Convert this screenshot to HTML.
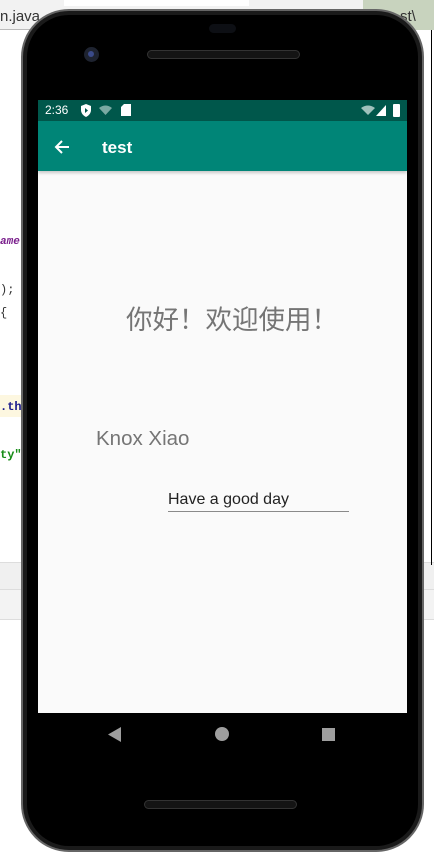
<!DOCTYPE html>
<html><head><meta charset="utf-8"><style>
*{margin:0;padding:0;box-sizing:border-box}
body{width:434px;height:861px;overflow:hidden;background:#fff;position:relative;font-family:"Liberation Sans","Noto Sans CJK SC",sans-serif}
.abs{position:absolute}
</style></head><body>
<div class="abs" style="left:0;top:0;width:434px;height:30px;background:#f2f2f2;border-bottom:1px solid #bbb"></div>
<div class="abs" style="left:64px;top:0;width:185px;height:6px;background:#fff"></div>
<div class="abs" style="left:363px;top:0;width:71px;height:30px;background:#c8d3be"></div>
<div class="abs" style="left:0;top:8px;font-size:15px;color:#333">n.java</div>
<div class="abs" style="left:400px;top:8px;font-size:15px;color:#333">st\</div>
<div class="abs" style="left:0;top:236px;font:italic bold 11px 'Liberation Mono',monospace;color:#7a1f8c">ame</div>
<div class="abs" style="left:0;top:283px;font:12px 'Liberation Mono',monospace;color:#333">);</div>
<div class="abs" style="left:0;top:306px;font:12px 'Liberation Mono',monospace;color:#333">{</div>
<div class="abs" style="left:0;top:395px;width:22px;height:22px;background:#fdf7e0"></div>
<div class="abs" style="left:0;top:400px;font:bold 12px 'Liberation Mono',monospace;color:#1a1a8c">.th</div>
<div class="abs" style="left:0;top:448px;font:bold 12px 'Liberation Mono',monospace;color:#178c17">ty"</div>
<div class="abs" style="left:0;top:562px;width:434px;height:28px;background:#f0f0f0;border-top:1px solid #ddd;border-bottom:1px solid #ddd"></div>
<div class="abs" style="left:0;top:590px;width:434px;height:30px;background:#f3f3f3;border-bottom:1px solid #ddd"></div>
<div class="abs" style="left:431px;top:30px;width:1px;height:535px;background:#000"></div>
<div class="abs" style="left:21px;top:9px;width:403px;height:843px;background:#1a1a1a;border-radius:48px;border:2px solid #666"></div>
<div class="abs" style="left:27px;top:15px;width:391px;height:831px;background:#000;border-radius:42px"></div>
<div class="abs" style="left:209px;top:24px;width:27px;height:9px;background:#0d0f14;border-radius:5px"></div>
<div class="abs" style="left:84px;top:47px;width:15px;height:15px;background:#1e2330;border-radius:50%"><div style="margin:4px;width:6px;height:6px;border-radius:50%;background:#3a4a8a"></div></div>
<div class="abs" style="left:147px;top:50px;width:153px;height:9px;background:#141414;border:1px solid #333;border-radius:5px"></div>
<div class="abs" style="left:144px;top:800px;width:153px;height:9px;background:#141414;border:1px solid #333;border-radius:5px"></div>
<div class="abs" style="left:38px;top:100px;width:369px;height:613px;background:#fafafa">
  <div style="height:21px;background:#00574b;color:#fff;font-size:12px;position:relative">
    <span class="abs" style="left:7px;top:3px">2:36</span>
    <svg class="abs" style="left:42px;top:4px" width="12" height="13" viewBox="0 0 12 13"><path d="M6 0L11 2V6C11 9 9 11.5 6 13C3 11.5 1 9 1 6V2Z" fill="#fff"/><path d="M5 4L8 6.5L5 9Z" fill="#00574b"/></svg>
    <svg class="abs" style="left:61px;top:5px" width="13" height="10" viewBox="0 0 13 10"><path d="M0 3Q6.5 -2 13 3L6.5 10Z" fill="#7aa9a2"/></svg>
    <svg class="abs" style="left:83px;top:4px" width="10" height="12" viewBox="0 0 10 12"><path d="M3 0H10V12H0V3Z" fill="#fff"/></svg>
    <svg class="abs" style="left:323px;top:5px" width="14" height="10" viewBox="0 0 14 10"><path d="M0 3Q7 -2 14 3L7 10Z" fill="#9fc1bc"/></svg>
    <svg class="abs" style="left:338px;top:5px" width="10" height="11" viewBox="0 0 10 11"><path d="M10 0V11H0Z" fill="#fff"/></svg>
    <div class="abs" style="left:355px;top:4px;width:7px;height:13px;background:#fff;border-radius:1px"></div>
  </div>
  <div style="height:50px;background:#008577;position:relative;box-shadow:0 2px 3px rgba(0,0,0,.2)">
    <svg class="abs" style="left:16px;top:18px" width="16" height="16" viewBox="0 0 16 16"><path d="M15 8H2M8 2L2 8L8 14" stroke="#fff" stroke-width="2" fill="none"/></svg>
    <span class="abs" style="left:64px;top:17px;color:#fff;font-size:17px;font-weight:bold">test</span>
  </div>
  <div class="abs" style="left:88px;top:198px;white-space:nowrap;font-size:26.5px;color:#757575">你好！欢迎使用！</div>
  <div class="abs" style="left:58px;top:327px;font-size:20.5px;color:#757575">Knox Xiao</div>
  <div class="abs" style="left:130px;top:391px;font-size:16px;color:#222">Have a good day</div>
  <div class="abs" style="left:130px;top:411px;width:181px;height:1px;background:#8a8a8a"></div>
</div>
<svg class="abs" style="left:108px;top:727px" width="14" height="15" viewBox="0 0 14 15"><path d="M13 0V15L0 7.5Z" fill="#9e9e9e"/></svg>
<div class="abs" style="left:215px;top:727px;width:14px;height:14px;border-radius:50%;background:#9e9e9e"></div>
<div class="abs" style="left:322px;top:728px;width:13px;height:13px;background:#9e9e9e"></div>
</body></html>
